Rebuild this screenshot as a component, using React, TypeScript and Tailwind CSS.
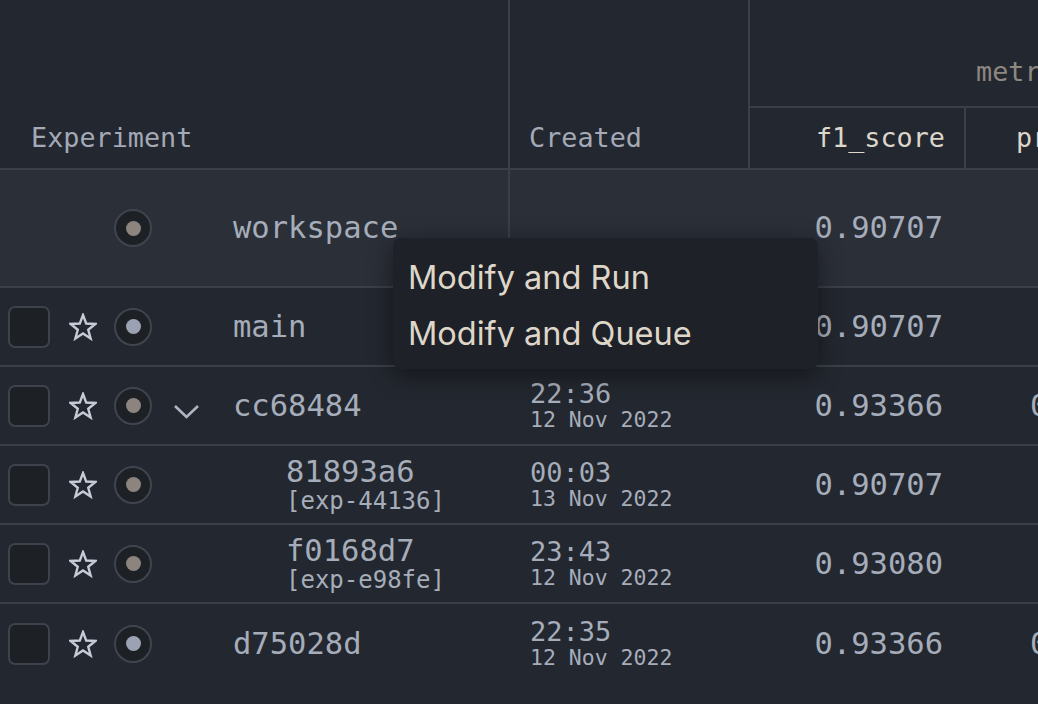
const line = "border-[#3b3f49]";

type Row = {
  name: string;
  label?: string;
  time: string;
  date: string;
  f1: string;
  precision?: string;
  dot: "warm" | "cool";
  chevron?: boolean;
  child?: boolean;
};

const rows: Row[] = [
  { name: "main", time: "", date: "", f1: "0.90707", dot: "cool" },
  { name: "cc68484", time: "22:36", date: "12 Nov 2022", f1: "0.93366", precision: "0.93421", dot: "warm", chevron: true },
  { name: "81893a6", label: "[exp-44136]", time: "00:03", date: "13 Nov 2022", f1: "0.90707", dot: "warm", child: true },
  { name: "f0168d7", label: "[exp-e98fe]", time: "23:43", date: "12 Nov 2022", f1: "0.93080", dot: "warm", child: true },
  { name: "d75028d", time: "22:35", date: "12 Nov 2022", f1: "0.93366", precision: "0.93421", dot: "cool" },
];

function Star() {
  return (
    <svg width="28" height="28" viewBox="0 0 28 28" className="ml-[19px] shrink-0">
      <polygon
        points="14,2 17.23,10.55 26.36,10.98 19.23,16.7 21.64,25.52 14,20.5 6.36,25.52 8.77,16.7 1.64,10.98 10.77,10.55"
        fill="none"
        stroke="#c5cbd7"
        strokeWidth="2.4"
      />
    </svg>
  );
}

function Dot({ tone }: { tone: "warm" | "cool" }) {
  return (
    <div className="ml-[17px] flex h-[38px] w-[38px] shrink-0 items-center justify-center rounded-full border-2 border-[#3f444e] bg-[#1d2025]">
      <div className={`h-[15px] w-[15px] rounded-full ${tone === "warm" ? "bg-[#8c847f]" : "bg-[#9ba2b3]"}`} />
    </div>
  );
}

function Chevron({ show }: { show?: boolean }) {
  return (
    <div className="ml-[21px] flex h-[20px] w-[27px] shrink-0 items-center justify-center pt-[12px]">
      {show && (
        <svg width="27" height="16" viewBox="0 0 27 16">
          <polyline points="2,2 13.5,13 25,2" fill="none" stroke="#aeb4c2" strokeWidth="2.6" />
        </svg>
      )}
    </div>
  );
}

function DataRow({ row, last }: { row: Row; last: boolean }) {
  return (
    <div className={`flex h-[79px] ${last ? "" : "border-b-2"} ${line}`}>
      <div className="flex w-[510px] shrink-0 items-center pl-[8px]">
        <div className="h-[42px] w-[42px] shrink-0 rounded-[7px] border-2 border-[#3d424c] bg-[#1d2025]" />
        <Star />
        <Dot tone={row.dot} />
        <Chevron show={row.chevron} />
        <div className={`flex flex-col ${row.child ? "ml-[86px]" : "ml-[33px]"}`}>
          <span className="text-[30.5px] leading-[32px] text-[#a6adba]">{row.name}</span>
          {row.label && <span className="text-[24px] leading-[26px] text-[#a6adba]">{row.label}</span>}
        </div>
      </div>
      <div className="flex w-[240px] shrink-0 flex-col justify-center pl-[20px] text-[#a6adba]">
        {row.time && <span className="text-[27px] leading-[29px]">{row.time}</span>}
        {row.date && <span className="text-[21.5px] leading-[24px]">{row.date}</span>}
      </div>
      <div className="flex w-[216px] shrink-0 items-center justify-end pr-[23px] text-[30.5px] text-[#a6adba]">{row.f1}</div>
      <div className="flex items-center pl-[64px] text-[30.5px] whitespace-nowrap text-[#a6adba]">{row.precision}</div>
    </div>
  );
}

export default function App() {
  return (
    <div className="relative h-[704px] w-[1038px] overflow-hidden bg-[#23272f] font-['DejaVu_Sans_Mono',monospace]">
      {/* header */}
      <div className={`flex h-[170px] border-b-2 ${line}`}>
        <div className={`flex w-[510px] shrink-0 flex-col border-r-2 ${line}`}>
          <div className="h-[108px]" />
          <div className="flex flex-1 items-center pl-[31px] text-[26.8px] text-[#a3aab7]">Experiment</div>
        </div>
        <div className={`flex w-[240px] shrink-0 flex-col border-r-2 ${line}`}>
          <div className="h-[108px]" />
          <div className="flex flex-1 items-center pl-[19px] text-[26.8px] text-[#a3aab7]">Created</div>
        </div>
        <div className="flex min-w-0 flex-1 flex-col">
          <div className={`flex h-[108px] items-end whitespace-nowrap border-b-2 pb-[14px] pl-[226px] text-[26.8px] text-[#8e8781] ${line}`}>
            metrics.json
          </div>
          <div className="flex flex-1">
            <div className={`flex w-[216px] shrink-0 items-center justify-end border-r-2 pr-[19px] text-[26.8px] text-[#ddd6ca] ${line}`}>
              f1_score
            </div>
            <div className="flex items-center whitespace-nowrap pl-[50px] text-[26.8px] text-[#ddd6ca]">precision</div>
          </div>
        </div>
      </div>

      {/* workspace row */}
      <div className={`flex h-[118px] border-b-2 bg-[#2b2f38] ${line}`}>
        <div className={`flex w-[510px] shrink-0 items-center border-r-2 pl-[8px] ${line}`}>
          <div className="w-[42px] shrink-0" />
          <div className="ml-[19px] w-[28px] shrink-0" />
          <Dot tone="warm" />
          <Chevron />
          <span className="ml-[33px] text-[30.5px] text-[#a6adba]">workspace</span>
        </div>
        <div className="w-[240px] shrink-0" />
        <div className="flex w-[216px] shrink-0 items-center justify-end pr-[23px] text-[30.5px] text-[#a6adba]">0.90707</div>
      </div>

      {rows.map((r, i) => (
        <DataRow key={r.name} row={r} last={i === rows.length - 1} />
      ))}

      {/* context menu */}
      <div className="absolute left-[393px] top-[238px] h-[131px] w-[425px] rounded-[8px] bg-[#1e2127] shadow-[0_6px_24px_rgba(0,0,0,0.45)]">
        <div className="h-[109px] overflow-hidden pt-[12px] font-['Inter',sans-serif] text-[32.5px] text-[#ddd6c9]">
          <div className="flex h-[56px] items-center pl-[15px]">Modify and Run</div>
          <div className="flex h-[56px] items-center pl-[15px]">Modify and Queue</div>
        </div>
      </div>
    </div>
  );
}
